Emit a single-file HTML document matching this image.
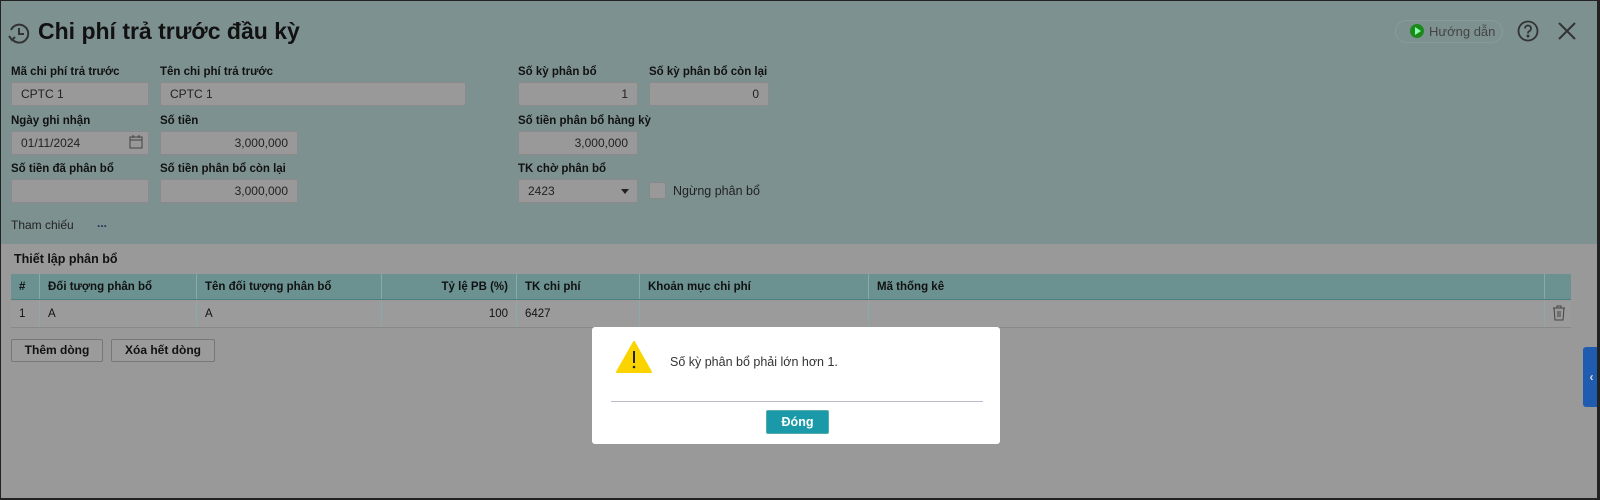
<!DOCTYPE html>
<html><head><meta charset="utf-8"><style>
*{box-sizing:border-box;margin:0;padding:0}
body{width:1600px;height:500px;overflow:hidden;font-family:"Liberation Sans",sans-serif;background:#999;position:relative;color:#111}
.frame{position:absolute;left:0;top:0;width:1600px;height:500px;border:1px solid #222;border-right:3px solid #222;border-bottom:2px solid #222}
.top{position:absolute;left:1px;top:1px;width:1597px;height:243px;background:#7e9191}
.title{position:absolute;left:38px;top:18px;font-size:23px;font-weight:bold;color:#111}
.lbl{position:absolute;font-size:11.5px;font-weight:bold;color:#111}
.in{position:absolute;height:24px;background:#999;border:1px solid #8a8a8a;border-radius:2px;font-size:12px;line-height:22px;padding:0 9px;color:#222}
.r{text-align:right}
.hdr{position:absolute;left:11px;top:274px;width:1560px;height:26px;background:#6b9191;border-bottom:1px solid #4d8080}
.row{position:absolute;left:11px;top:301px;width:1560px;height:27px;background:#9b9b9b;border-bottom:1px solid #888}
.c{position:absolute;top:0;height:100%;font-size:11.5px;line-height:26px;border-left:1px solid #8aa;padding:0 8px}
.hdr .c{font-weight:bold;color:#111}
.btn{position:absolute;top:339px;height:23px;border:1px solid #777;border-radius:2px;background:#9b9b9b;font-size:12px;font-weight:bold;line-height:21px;text-align:center}
.dlg{position:absolute;left:592px;top:327px;width:408px;height:117px;background:#fff;border-radius:3px}
</style></head><body>
<div class="top"></div>
<svg style="position:absolute;left:7px;top:22px" width="24" height="24" viewBox="0 0 24 24" fill="none" stroke="#333" stroke-width="2"><path d="M5 17A9 9 0 1 0 4 8"/><path d="M12 6v6h5"/><path d="M2 14l3 4 3-3"/></svg>
<div class="title">Chi phí trả trước đầu kỳ</div>
<div style="position:absolute;left:1395px;top:20px;width:108px;height:23px;border:1px solid #8a9a9a;border-radius:12px;font-size:13px;color:#444;line-height:21px;padding-left:33px">Hướng dẫn</div>
<div style="position:absolute;left:1410px;top:24px;width:14px;height:14px;border-radius:50%;background:#1b8a1b"></div>
<div style="position:absolute;left:1415px;top:27px;width:0;height:0;border-left:6px solid #8fa;border-top:4px solid transparent;border-bottom:4px solid transparent"></div>
<svg style="position:absolute;left:1517px;top:20px" width="22" height="22" viewBox="0 0 22 22" fill="none" stroke="#333" stroke-width="1.8"><circle cx="11" cy="11" r="9.5"/><path d="M8 8.5a3 3 0 1 1 4 2.8c-1 .4-1 1-1 2.2"/><circle cx="11" cy="16" r=".6" fill="#333"/></svg>
<svg style="position:absolute;left:1558px;top:22px" width="18" height="18" viewBox="0 0 18 18" stroke="#333" stroke-width="2"><path d="M1 1L17 17M17 1L1 17"/></svg>

<div class="lbl" style="left:11px;top:66px">Mã chi phí trả trước</div>
<div class="in" style="left:11px;top:82px;width:138px">CPTC 1</div>
<div class="lbl" style="left:160px;top:66px">Tên chi phí trả trước</div>
<div class="in" style="left:160px;top:82px;width:306px">CPTC 1</div>
<div class="lbl" style="left:11px;top:115px">Ngày ghi nhận</div>
<div class="in" style="left:11px;top:131px;width:138px">01/11/2024</div>
<svg style="position:absolute;left:129px;top:135px" width="14" height="14" viewBox="0 0 14 14" fill="none" stroke="#444"><rect x="1" y="2" width="12" height="11"/><path d="M1 5h12M4 0v3M10 0v3"/></svg>
<div class="lbl" style="left:160px;top:115px">Số tiền</div>
<div class="in r" style="left:160px;top:131px;width:138px">3,000,000</div>
<div class="lbl" style="left:11px;top:163px">Số tiền đã phân bổ</div>
<div class="in" style="left:11px;top:179px;width:138px"></div>
<div class="lbl" style="left:160px;top:163px">Số tiền phân bổ còn lại</div>
<div class="in r" style="left:160px;top:179px;width:138px">3,000,000</div>
<div style="position:absolute;left:11px;top:218px;font-size:12px;color:#222">Tham chiếu</div>
<div style="position:absolute;left:97px;top:216px;font-size:12px;color:#235;font-weight:bold">...</div>

<div class="lbl" style="left:518px;top:66px">Số kỳ phân bổ</div>
<div class="in r" style="left:518px;top:82px;width:120px">1</div>
<div class="lbl" style="left:649px;top:66px">Số kỳ phân bổ còn lại</div>
<div class="in r" style="left:649px;top:82px;width:120px">0</div>
<div class="lbl" style="left:518px;top:115px">Số tiền phân bổ hàng kỳ</div>
<div class="in r" style="left:518px;top:131px;width:120px">3,000,000</div>
<div class="lbl" style="left:518px;top:163px">TK chờ phân bổ</div>
<div class="in" style="left:518px;top:179px;width:120px">2423</div>
<div style="position:absolute;left:621px;top:189px;border-top:5px solid #222;border-left:4px solid transparent;border-right:4px solid transparent"></div>
<div style="position:absolute;left:649px;top:182px;width:17px;height:17px;background:#999;border:1px solid #888;border-radius:2px"></div>
<div style="position:absolute;left:673px;top:184px;font-size:12.5px;color:#222">Ngừng phân bổ</div>

<div class="lbl" style="left:14px;top:252px;font-size:12.5px">Thiết lập phân bổ</div>
<div class="hdr">
<div class="c" style="left:0;width:28px;border:0">#</div>
<div class="c" style="left:28px;width:157px">Đối tượng phân bổ</div>
<div class="c" style="left:185px;width:185px">Tên đối tượng phân bổ</div>
<div class="c r" style="left:370px;width:135px">Tỷ lệ PB (%)</div>
<div class="c" style="left:505px;width:123px">TK chi phí</div>
<div class="c" style="left:628px;width:229px">Khoản mục chi phí</div>
<div class="c" style="left:857px;width:676px">Mã thống kê</div>
<div class="c" style="left:1533px;width:27px"></div>
</div>
<div class="row">
<div class="c" style="left:0;width:28px;border:0">1</div>
<div class="c" style="left:28px;width:157px">A</div>
<div class="c" style="left:185px;width:185px">A</div>
<div class="c r" style="left:370px;width:135px">100</div>
<div class="c" style="left:505px;width:123px">6427</div>
<div class="c" style="left:628px;width:229px"></div>
<div class="c" style="left:857px;width:676px"></div>
<div class="c" style="left:1533px;width:27px"></div>
</div>
<svg style="position:absolute;left:1552px;top:305px" width="14" height="16" viewBox="0 0 14 16" fill="none" stroke="#444"><path d="M1 3h12M5 3V1h4v2M2 3l1 12h8l1-12M6 6v6M8 6v6"/></svg>
<div class="btn" style="left:11px;width:92px">Thêm dòng</div>
<div class="btn" style="left:111px;width:104px">Xóa hết dòng</div>
<div style="position:absolute;left:1583px;top:347px;width:17px;height:60px;background:#1f5cb0;border-radius:3px 0 0 3px;color:#ddd;font-size:12px;line-height:60px;text-align:center;font-weight:bold">‹</div>

<div class="dlg">
<svg style="position:absolute;left:24px;top:14px" width="36" height="32" viewBox="0 0 36 32"><path d="M18 1L35 31H1Z" fill="#fbd400" stroke="#fbd400" stroke-linejoin="round" stroke-width="2"/><path d="M18 10v12" stroke="#222" stroke-width="2"/><circle cx="18" cy="26" r="1.3" fill="#222"/></svg>
<div style="position:absolute;left:78px;top:28px;font-size:12.5px;color:#333">Số kỳ phân bổ phải lớn hơn 1.</div>
<div style="position:absolute;left:19px;top:74px;width:372px;height:1px;background:#bbc"></div>
<div style="position:absolute;left:174px;top:83px;width:63px;height:24px;background:#1a9aa8;border:1px solid #5aa;border-radius:2px;color:#fff;font-weight:bold;font-size:12.5px;line-height:22px;text-align:center">Đóng</div>
</div>
<div class="frame"></div>
</body></html>
